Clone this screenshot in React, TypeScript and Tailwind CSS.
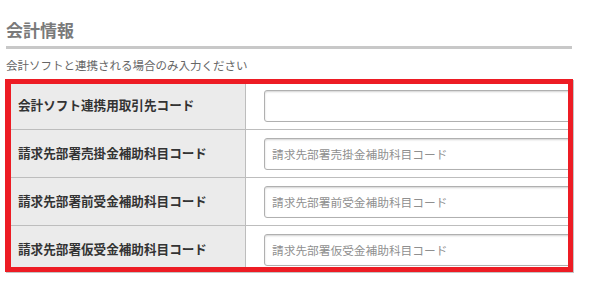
import React from "react";

const rows = [
  { label: "会計ソフト連携用取引先コード", placeholder: "" },
  { label: "請求先部署売掛金補助科目コード", placeholder: "請求先部署売掛金補助科目コード" },
  { label: "請求先部署前受金補助科目コード", placeholder: "請求先部署前受金補助科目コード" },
  { label: "請求先部署仮受金補助科目コード", placeholder: "請求先部署仮受金補助科目コード" },
];

export default function App() {
  return (
    <div className="w-[590px] h-[294px] bg-white overflow-hidden font-['Noto_Sans_CJK_JP','Noto_Sans',sans-serif]">
      <div className="pl-[6px] pt-[21px]">
        <h2 className="text-[17px] leading-[17px] font-bold text-[#7a7a7a]">会計情報</h2>
        <div className="mt-[8px] h-[3px] w-[566px] bg-[#c8c8c8]" />
        <p className="mt-[8px] text-[11.5px] leading-[16px] text-[#666]">
          会計ソフトと連携される場合のみ入力ください
        </p>
      </div>
      <div className="ml-[5px] mt-[6px] w-[568px] h-[193px] box-border border-[5px] border-l-[6px] border-[#ed1c24] overflow-hidden shadow-[1px_1px_0_#c4c4c4]">
        <div className="-mt-[3px]">
          {rows.map((r, i) => (
            <div
              key={i}
              className="flex h-[48px] border-t border-[#bdbdbd]"
            >
              <div className="w-[235px] shrink-0 bg-[#ebebeb] border-r border-[#bdbdbd] flex items-center pl-[7px] text-[12.6px] font-bold text-[#333]">
                {r.label}
              </div>
              <div className="flex items-center pl-[18px] bg-white grow">
                <input
                  type="text"
                  placeholder={r.placeholder}
                  className="w-[330px] h-[32px] shrink-0 rounded-[3px] border border-[#b0b0b0] bg-white px-[7px] text-[11.7px] text-[#333] placeholder:text-[#8f8f8f] shadow-[inset_0_1px_2px_rgba(0,0,0,0.18)] outline-none font-['Noto_Sans_CJK_JP','Noto_Sans',sans-serif]"
                />
              </div>
            </div>
          ))}
        </div>
      </div>
    </div>
  );
}
